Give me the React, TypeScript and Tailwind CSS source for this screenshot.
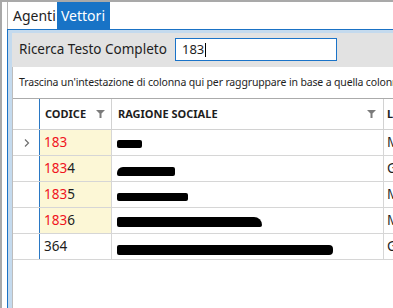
import React from 'react';

const FONT = { fontFamily: '"Noto Sans", "Open Sans", sans-serif' };

const FilterIcon = () => (
  <svg width="9" height="8" viewBox="0 0 9 8" className="shrink-0">
    <path d="M0 0 H9 L5.5 3.5 V8 H3.5 V3.5 Z" fill="#7b7b7b" />
  </svg>
);

const Chevron = () => (
  <svg width="6" height="8" viewBox="0 0 6 8">
    <path d="M1 0.5 L4.5 4 L1 7.5" fill="none" stroke="#6e6e6e" strokeWidth="1.2" />
  </svg>
);

interface Row {
  code: string;
  match: number;
  scribble: string;
  city: string;
  current?: boolean;
}

const rows: Row[] = [
  { code: '183', match: 3, scribble: 'w-[25px] h-[8px] mt-[2px]', city: 'MILANO', current: true },
  { code: '1834', match: 3, scribble: 'w-[58px] h-[9px] mt-[5px] rounded-tl-[6px]', city: 'GENOVA' },
  { code: '1835', match: 3, scribble: 'w-[71px] h-[8px] mt-[5px]', city: 'MILANO' },
  { code: '1836', match: 3, scribble: 'w-[145px] h-[10px] mt-[3px] rounded-tr-[8px]', city: 'MILANO' },
  { code: '364', match: 0, scribble: 'w-[216px] h-[10px] mt-[6px] rounded-r-[4px]', city: 'GENOVA' },
];

const App: React.FC = () => {
  return (
    <div
      className="w-[393px] h-[308px] overflow-hidden bg-white border-t-2 border-l-2 border-[#a9a9a9] flex flex-col text-[#1e1e1e]"
      style={FONT}
    >
      {/* tab strip */}
      <div className="flex h-[27px] shrink-0 pl-[5px]">
        <div className="w-[50px] border-l border-[#b4b4b4] bg-white flex items-center pl-[5px] text-[14px]">
          Agenti
        </div>
        <div className="w-[53px] bg-[#1873c6] text-white flex items-center pl-[4px] text-[14px] -mt-[1px]">
          Vettori
        </div>
      </div>

      {/* tab page */}
      <div className="flex-1 ml-[5px] border-l border-t border-[#1a72c5] flex flex-col min-h-0">
        <div className="flex-1 border-l-[4px] border-t-[3px] border-[#c4daee] flex flex-col min-h-0">
          {/* search panel */}
          <div className="h-[34px] shrink-0 bg-[#e2e2e2] flex items-center pl-[7px]">
            <span className="text-[13.5px] w-[156px] -mt-[1px]">Ricerca Testo Completo</span>
            <div className="w-[162px] h-[23px] border border-[#1a73c8] bg-white flex items-center pl-[6px] text-[13px] -mt-[1px]">
              <span>183</span>
              <span className="w-px h-[14px] bg-black ml-px" />
            </div>
          </div>

          {/* grid control */}
          <div className="flex-1 border-l border-[#bdbdbd] flex flex-col min-h-0">
            <div className="h-[31px] shrink-0 flex items-center pl-[6px] text-[10.5px] tracking-[-0.15px] whitespace-nowrap overflow-hidden">
              Trascina un'intestazione di colonna qui per raggruppare in base a quella colonna
            </div>
            <div className="flex-1 border-t border-[#ababab] min-h-0 overflow-hidden">
              {/* header */}
              <div className="flex h-[31px] border-b border-[#d2d2d2] text-[11px] font-bold whitespace-nowrap">
                <div className="w-[27px] shrink-0 border-r border-[#2a78c4]" />
                <div className="w-[72px] shrink-0 border-r border-[#d2d2d2] flex items-center justify-between pl-[5px] pr-[6px]">
                  <span>CODICE</span>
                  <FilterIcon />
                </div>
                <div className="w-[272px] shrink-0 border-r border-[#d2d2d2] flex items-center justify-between pl-[6px] pr-[7px]">
                  <span>RAGIONE SOCIALE</span>
                  <FilterIcon />
                </div>
                <div className="flex-1 flex items-center pl-[3px] overflow-hidden">LOCALITÀ</div>
              </div>

              {/* rows */}
              {rows.map((r) => (
                <div key={r.code} className="flex h-[26px] border-b border-[#d6d6d6] text-[13.5px] whitespace-nowrap">
                  <div className="w-[27px] shrink-0 border-r border-[#2a78c4] flex items-center justify-center pl-[2px]">
                    {r.current && <Chevron />}
                  </div>
                  <div
                    className={`w-[72px] shrink-0 border-r border-[#d6d6d6] flex items-center pl-[4px] ${
                      r.match > 0 ? 'bg-[#fcf7d6]' : 'bg-white'
                    }`}
                  >
                    <span className="text-[#f0141e]">{r.code.slice(0, r.match)}</span>
                    <span>{r.code.slice(r.match)}</span>
                  </div>
                  <div className="w-[272px] shrink-0 border-r border-[#d6d6d6] flex items-center pl-[5px]">
                    <div className={`bg-black rounded-[2px] ${r.scribble}`} />
                  </div>
                  <div className="flex-1 flex items-center pl-[3px] overflow-hidden">{r.city}</div>
                </div>
              ))}
            </div>
          </div>
        </div>
      </div>
    </div>
  );
};

export default App;
